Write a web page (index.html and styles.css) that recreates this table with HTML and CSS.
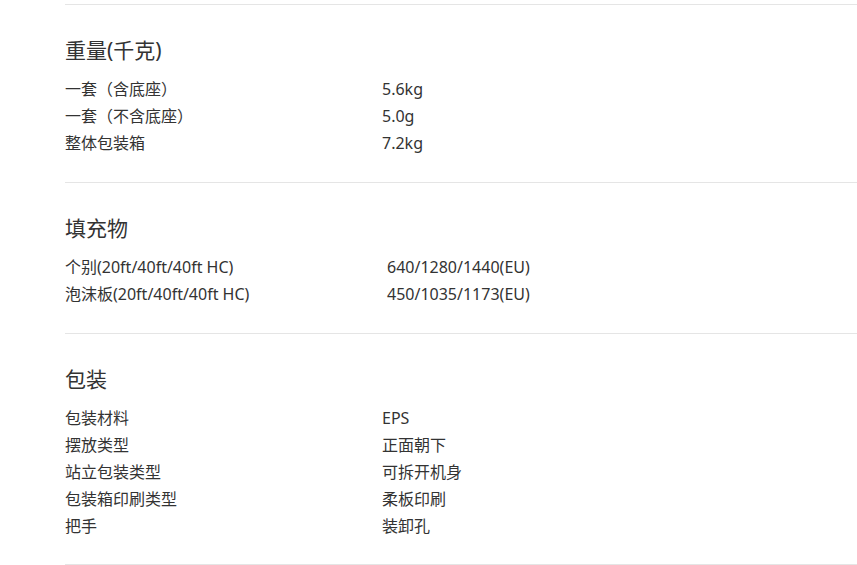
FILE: index.html
```html
<!DOCTYPE html>
<html lang="zh-CN">
<head>
<meta charset="utf-8">
<title>规格</title>
<link rel="stylesheet" href="styles.css">
</head>
<body>
<div class="specs">
  <section class="spec-section">
    <h2 class="spec-title">重量(千克)</h2>
    <dl class="spec-table">
      <dt>一套（含底座）</dt><dd>5.6kg</dd>
      <dt>一套（不含底座）</dt><dd>5.0g</dd>
      <dt>整体包装箱</dt><dd>7.2kg</dd>
    </dl>
  </section>
  <section class="spec-section">
    <h2 class="spec-title">填充物</h2>
    <dl class="spec-table spec-table--shift">
      <dt>个别(20ft/40ft/40ft HC)</dt><dd>640/1280/1440(EU)</dd>
      <dt>泡沫板(20ft/40ft/40ft HC)</dt><dd>450/1035/1173(EU)</dd>
    </dl>
  </section>
  <section class="spec-section spec-section--last">
    <h2 class="spec-title">包装</h2>
    <dl class="spec-table">
      <dt>包装材料</dt><dd>EPS</dd>
      <dt>摆放类型</dt><dd>正面朝下</dd>
      <dt>站立包装类型</dt><dd>可拆开机身</dd>
      <dt>包装箱印刷类型</dt><dd>柔板印刷</dd>
      <dt>把手</dt><dd>装卸孔</dd>
    </dl>
  </section>
  <div class="spec-end"></div>
</div>
</body>
</html>
```
FILE: styles.css
```css
html, body {
  margin: 0;
  padding: 0;
  background: #ffffff;
}
body {
  font-family: "Noto Sans", "Noto Sans CJK SC", sans-serif;
  color: #333333;
  overflow: hidden;
}
.specs {
  padding: 4px 0 0 65px;
}
.spec-section {
  border-top: 1px solid #e5e5e5;
  padding: 30px 0 25px;
}
.spec-section--last {
  padding-bottom: 24px;
}
.spec-title {
  margin: 0 0 11px;
  font-size: 21px;
  line-height: 30px;
  font-weight: 400;
  color: #333333;
}
.spec-table {
  margin: 0;
  display: grid;
  grid-template-columns: 317px 1fr;
  font-size: 16px;
  line-height: 27px;
}
.spec-table dt,
.spec-table dd {
  margin: 0;
  white-space: nowrap;
}
.spec-table--shift dd {
  padding-left: 5px;
}
.spec-end {
  border-top: 1px solid #e5e5e5;
}
```
